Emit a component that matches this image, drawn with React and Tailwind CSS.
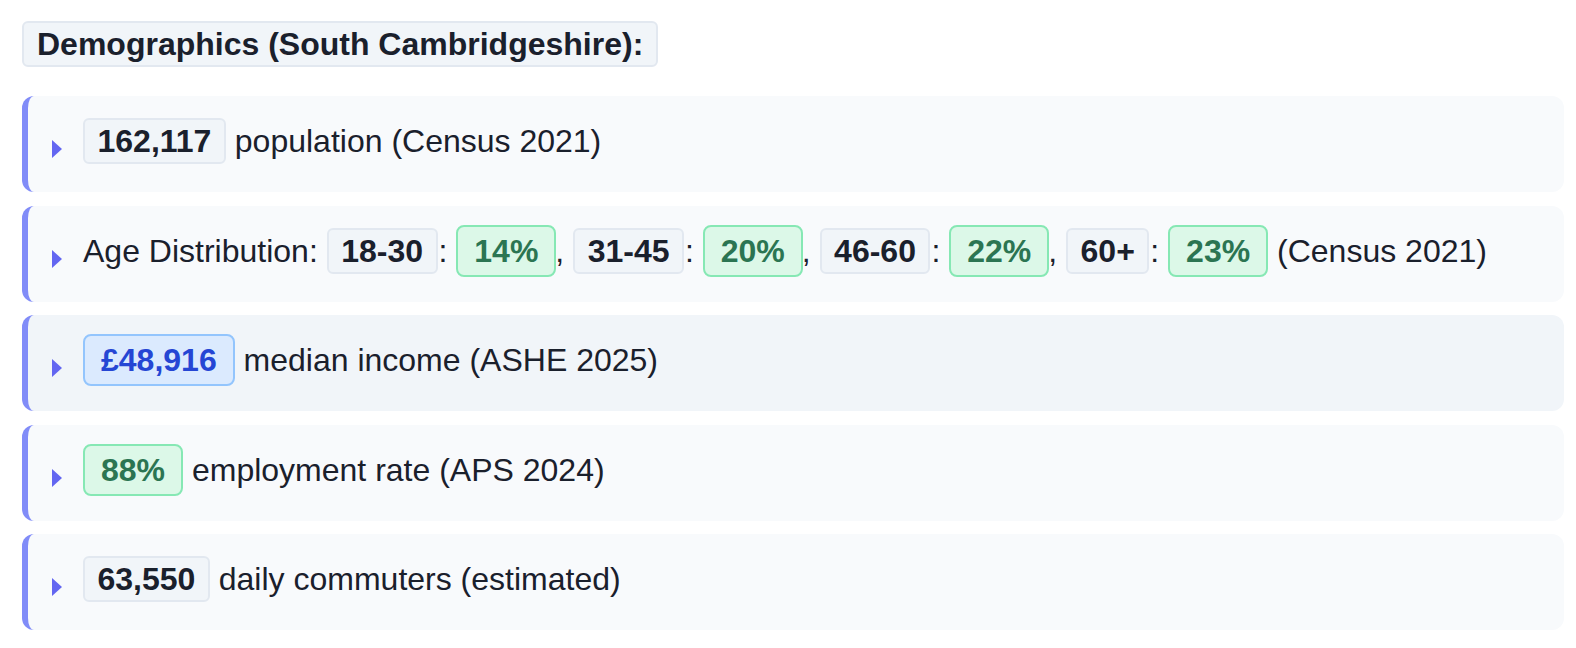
import React from "react";

const Tri = () => (
  <svg className="mt-4 mr-[21px] shrink-0" width="10" height="18" viewBox="0 0 10 18">
    <polygon points="0,0 10,9 0,18" fill="#6366f1" />
  </svg>
);

const Grey = ({ children, tight }) => (
  <span
    className={
      "inline-block rounded-[6px] border-2 border-[#e2e8f0] bg-[#f1f5f9] px-[12.5px] py-[2px] font-bold leading-[38px] text-[#1a202c] " +
      (tight ? "mr-[1px]" : "")
    }
  >
    {children}
  </span>
);

const Green = ({ children, tight }) => (
  <span
    className={
      "inline-block rounded-[8px] border-2 border-[#86e8b4] bg-[#dcf8e8] px-[16px] py-[5px] font-bold leading-[38px] text-[#2b7552] " +
      (tight ? "mr-[-1px]" : "")
    }
  >
    {children}
  </span>
);

const Blue = ({ children }) => (
  <span className="inline-block rounded-[8px] border-2 border-[#93c5fd] bg-[#dbeafe] px-[16px] py-[5px] font-bold leading-[38px] text-[#2546d4]">
    {children}
  </span>
);

const Card = ({ children, hover }) => (
  <div
    className={
      "flex h-[96px] items-start rounded-xl border-l-[6px] border-[#818cf8] pl-[24px] pt-[19px] " +
      (hover ? "bg-[#f1f5f9]" : "bg-[#f8fafc]")
    }
  >
    <div className="flex h-[52px] items-center">
      <Tri />
      <div className="whitespace-pre leading-[52px]">{children}</div>
    </div>
  </div>
);

export default function App() {
  return (
    <div
      className="bg-white pt-[20px] pb-[19px] pl-[22px] pr-[12px] text-[32px] text-[#1a202c]"
      style={{ fontFamily: '"Liberation Sans", Arial, Helvetica, sans-serif' }}
    >
      <div className="mb-[29px] inline-block rounded-[6px] border-2 border-[#e2e8f0] bg-[#f1f5f9] px-[13px] py-[2px] font-bold leading-[38px]">
        Demographics (South Cambridgeshire):
      </div>
      <div className="flex flex-col gap-[13.5px]">
        <Card>
          <Grey>162,117</Grey> population (Census 2021)
        </Card>
        <Card>
          {"Age Distribution: "}
          <Grey tight>18-30</Grey>{": "}
          <Green tight>14%</Green>{", "}
          <Grey tight>31-45</Grey>{": "}
          <Green tight>20%</Green>{", "}
          <Grey tight>46-60</Grey>{": "}
          <Green tight>22%</Green>{", "}
          <Grey tight>60+</Grey>{": "}
          <Green>23%</Green>
          {" (Census 2021)"}
        </Card>
        <Card hover>
          <Blue>£48,916</Blue> median income (ASHE 2025)
        </Card>
        <Card>
          <Green>88%</Green> employment rate (APS 2024)
        </Card>
        <Card>
          <Grey>63,550</Grey> daily commuters (estimated)
        </Card>
      </div>
    </div>
  );
}
